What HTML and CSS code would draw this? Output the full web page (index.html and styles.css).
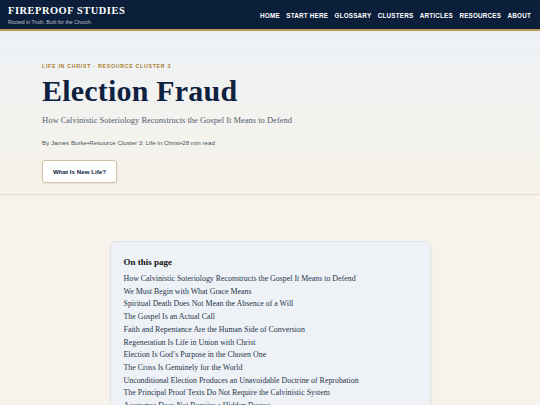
FILE: index.html
```html
<!DOCTYPE html>
<html lang="en">
<head>
    <meta charset="UTF-8">
    <meta name="viewport" content="width=device-width, initial-scale=1.0">
    <title>Election Fraud | Fireproof Studies</title>
    <link rel="stylesheet" href="styles.css">
</head>
<body>

    <header class="site-header">
        <div class="brand">
            <div class="brand-name">FIREPROOF STUDIES</div>
            <div class="brand-tagline">Rooted in Truth. Built for the Church.</div>
        </div>
        <nav class="site-nav">
            <a href="#">Home</a>
            <a href="#">Start Here</a>
            <a href="#">Glossary</a>
            <a href="#">Clusters</a>
            <a href="#">Articles</a>
            <a href="#">Resources</a>
            <a href="#">About</a>
        </nav>
    </header>

    <section class="hero">
        <div class="eyebrow">Life in Christ · Resource Cluster 3</div>
        <h1 class="hero-title">Election Fraud</h1>
        <p class="hero-subtitle">How Calvinistic Soteriology Reconstructs the Gospel It Means to Defend</p>
        <p class="byline">By James Burke<span>•</span>Resource Cluster 3: Life in Christ<span>•</span>28 min read</p>
        <a class="hero-button" href="#">What Is New Life?</a>
    </section>

    <main class="content">
        <div class="toc">
            <h2>On this page</h2>
            <ul>
                <li><a href="#">How Calvinistic Soteriology Reconstructs the Gospel It Means to Defend</a></li>
                <li><a href="#">We Must Begin with What Grace Means</a></li>
                <li><a href="#">Spiritual Death Does Not Mean the Absence of a Will</a></li>
                <li><a href="#">The Gospel Is an Actual Call</a></li>
                <li><a href="#">Faith and Repentance Are the Human Side of Conversion</a></li>
                <li><a href="#">Regeneration Is Life in Union with Christ</a></li>
                <li><a href="#">Election Is God’s Purpose in the Chosen One</a></li>
                <li><a href="#">The Cross Is Genuinely for the World</a></li>
                <li><a href="#">Unconditional Election Produces an Unavoidable Doctrine of Reprobation</a></li>
                <li><a href="#">The Principal Proof Texts Do Not Require the Calvinistic System</a></li>
                <li><a href="#">Assurance Does Not Require a Hidden Decree</a></li>
            </ul>
        </div>
    </main>

</body>
</html>
```

FILE: styles.css
```css
* {
    box-sizing: border-box;
}

html, body {
    margin: 0;
    padding: 0;
}

body {
    background: #f7f3ec;
    font-family: "Liberation Sans", Arial, sans-serif;
    color: #1c2534;
    overflow: hidden;
}

a {
    color: inherit;
    text-decoration: none;
}

/*--------------------
Header
--------------------*/
.site-header {
    height: 31px;
    background: #0b1f3b;
    border-bottom: 2px solid #b8974f;
    display: flex;
    align-items: center;
    justify-content: space-between;
    padding: 2px 9px 0 8px;
}

.brand-name {
    font-family: "Liberation Serif", Georgia, serif;
    font-weight: bold;
    font-size: 10.4px;
    letter-spacing: 0.55px;
    color: #fff;
    line-height: 1;
}

.brand-tagline {
    font-size: 5.2px;
    color: rgba(255, 255, 255, 0.7);
    margin-top: 2px;
}

.site-nav {
    display: flex;
    gap: 6.5px;
}

.site-nav a {
    color: #fff;
    font-size: 6.3px;
    font-weight: bold;
    text-transform: uppercase;
    letter-spacing: 0.2px;
}

/*--------------------
Hero
--------------------*/
.hero {
    background: linear-gradient(180deg, #edf1f6 0%, #f2f2ef 50%, #f7f2e9 100%);
    border-bottom: 1px solid #e5e0d2;
    padding: 32px 42px 12px;
    height: 164px;
}

.eyebrow {
    font-size: 5.2px;
    font-weight: bold;
    letter-spacing: 0.75px;
    text-transform: uppercase;
    color: #a8802c;
}

.hero-title {
    font-family: "Liberation Serif", Georgia, serif;
    font-weight: bold;
    font-size: 30px;
    color: #0e2140;
    margin: 5px 0 0;
    line-height: 1.1;
    letter-spacing: 0.2px;
}

.hero-subtitle {
    font-family: "Liberation Serif", Georgia, serif;
    font-size: 8.5px;
    color: #55606e;
    margin: 8px 0 0;
}

.byline {
    font-size: 6.2px;
    color: #4a5260;
    margin: 14px 0 0;
}

.hero-button {
    display: inline-block;
    margin-top: 14px;
    padding: 7px 10px;
    background: #fff;
    border: 1px solid #cfc4a8;
    border-radius: 3px;
    font-size: 6.2px;
    font-weight: bold;
    color: #0e2140;
    box-shadow: 0 1px 2px rgba(0, 0, 0, 0.08);
}

/*--------------------
Table of contents
--------------------*/
.content {
    padding-top: 46px;
    display: flex;
    justify-content: center;
}

.toc {
    width: 321px;
    background: #eef2f7;
    border: 1px solid #e0e3e6;
    border-radius: 6px;
    padding: 15px 13px 20px;
    box-shadow: 0 1px 3px rgba(0, 0, 0, 0.05);
}

.toc h2 {
    font-family: "Liberation Serif", Georgia, serif;
    font-size: 9px;
    font-weight: bold;
    color: #111;
    margin: 0 0 6px;
}

.toc ul {
    list-style: none;
    margin: 0;
    padding: 0;
}

.toc li {
    font-family: "Liberation Serif", Georgia, serif;
    font-size: 7.9px;
    line-height: 12.7px;
    color: #26344a;
}
```
